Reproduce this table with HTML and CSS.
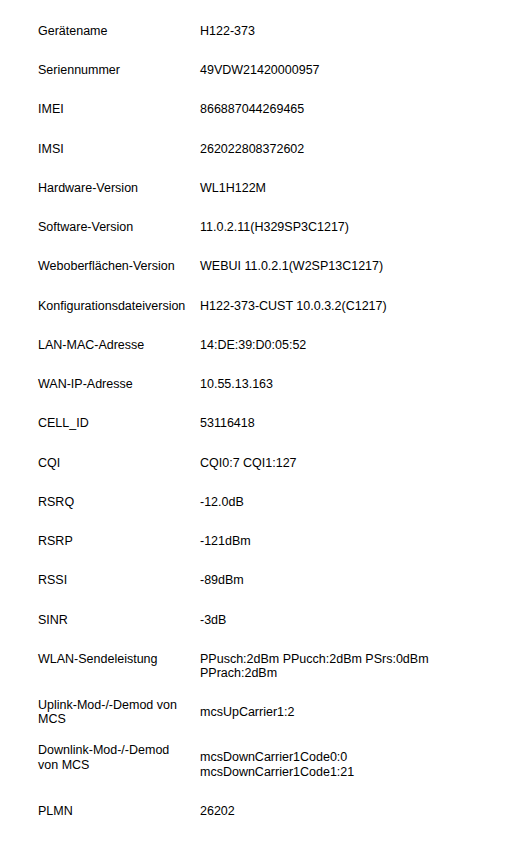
FILE: index.html
```html
<!DOCTYPE html>
<html lang="de">
<head>
<meta charset="utf-8">
<title>Geräteinformationen</title>
<link rel="stylesheet" href="styles.css">
</head>
<body>
<div class="info">
  <div class="row"><div class="label">Gerätename</div><div class="value">H122-373</div></div>
  <div class="row"><div class="label">Seriennummer</div><div class="value">49VDW21420000957</div></div>
  <div class="row"><div class="label">IMEI</div><div class="value">866887044269465</div></div>
  <div class="row"><div class="label">IMSI</div><div class="value">262022808372602</div></div>
  <div class="row"><div class="label">Hardware-Version</div><div class="value">WL1H122M</div></div>
  <div class="row"><div class="label">Software-Version</div><div class="value">11.0.2.11(H329SP3C1217)</div></div>
  <div class="row"><div class="label">Weboberflächen-Version</div><div class="value">WEBUI 11.0.2.1(W2SP13C1217)</div></div>
  <div class="row"><div class="label">Konfigurationsdateiversion</div><div class="value">H122-373-CUST 10.0.3.2(C1217)</div></div>
  <div class="row"><div class="label">LAN-MAC-Adresse</div><div class="value">14:DE:39:D0:05:52</div></div>
  <div class="row"><div class="label">WAN-IP-Adresse</div><div class="value">10.55.13.163</div></div>
  <div class="row"><div class="label">CELL_ID</div><div class="value">53116418</div></div>
  <div class="row"><div class="label">CQI</div><div class="value">CQI0:7 CQI1:127</div></div>
  <div class="row"><div class="label">RSRQ</div><div class="value">-12.0dB</div></div>
  <div class="row"><div class="label">RSRP</div><div class="value">-121dBm</div></div>
  <div class="row"><div class="label">RSSI</div><div class="value">-89dBm</div></div>
  <div class="row"><div class="label">SINR</div><div class="value">-3dB</div></div>
  <div class="row row-wlan"><div class="label">WLAN-Sendeleistung</div><div class="value">PPusch:2dBm PPucch:2dBm PSrs:0dBm PPrach:2dBm</div></div>
  <div class="row row-uplink"><div class="label">Uplink-Mod-/-Demod von MCS</div><div class="value">mcsUpCarrier1:2</div></div>
  <div class="row row-downlink"><div class="label">Downlink-Mod-/-Demod von MCS</div><div class="value value-shift">mcsDownCarrier1Code0:0 mcsDownCarrier1Code1:21</div></div>
  <div class="row"><div class="label">PLMN</div><div class="value">26202</div></div>
</div>
</body>
</html>
```

FILE: styles.css
```css
html, body {
  margin: 0;
  padding: 0;
  background: #ffffff;
}

body {
  font-family: "Liberation Sans", Arial, sans-serif;
  font-size: 12.5px;
  line-height: 14.375px;
  color: #000000;
}

.info {
  padding: 11.4px 38px 0 38px;
}

.row {
  display: grid;
  grid-template-columns: 150px 1fr;
  column-gap: 12px;
  align-items: center;
  padding: 12.45px 0;
}

.label,
.value {
  min-width: 0;
}

.row-wlan {
  align-items: start;
  padding-bottom: 4.6px;
}

.row-uplink {
  padding-bottom: 4.6px;
}

.row-downlink {
  align-items: start;
}

.value-shift {
  margin-top: 7px;
}
```
